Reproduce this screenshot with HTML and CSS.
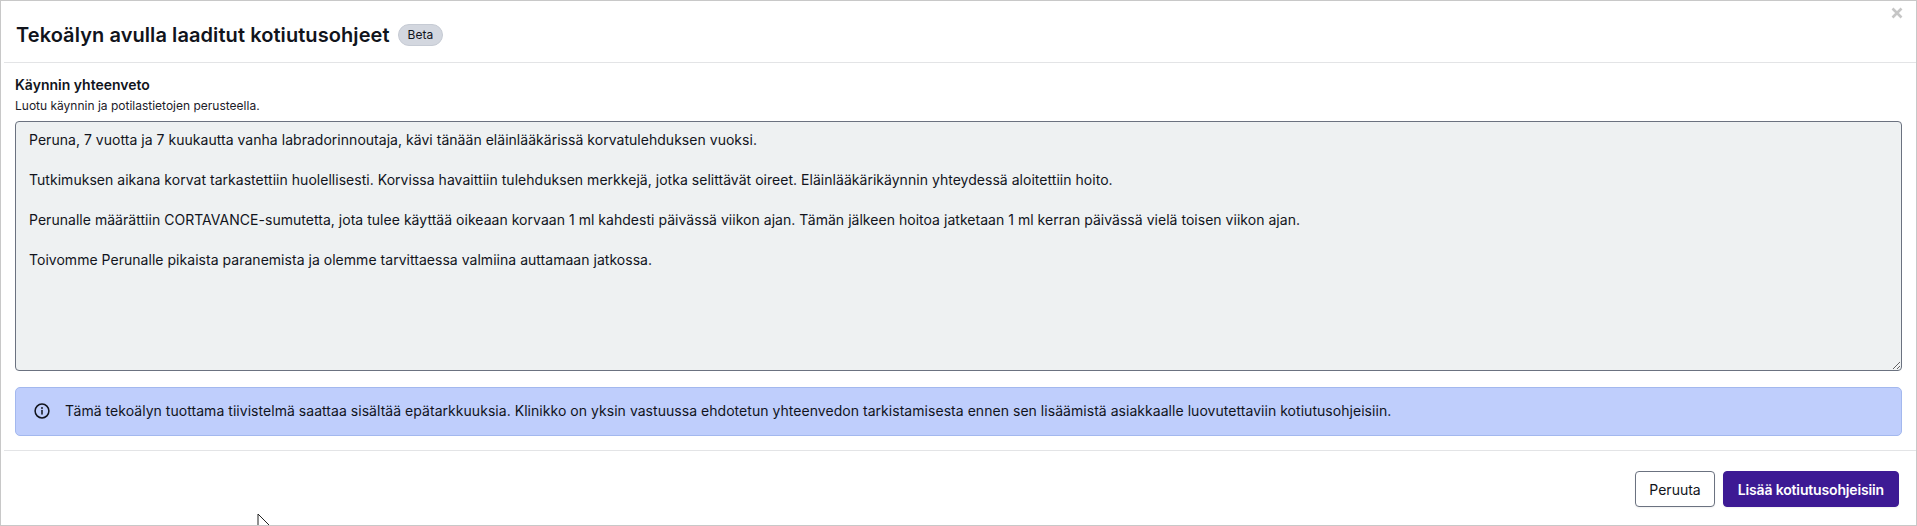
FILE: index.html
```html
<!DOCTYPE html>
<html lang="fi">
<head>
  <meta charset="UTF-8">
  <title>Tekoälyn avulla laaditut kotiutusohjeet</title>
  <link rel="stylesheet" href="styles.css">
</head>
<body>
  <div class="dialog">
    <button class="close-btn" aria-label="Sulje">
      <svg viewBox="0 0 12 12" width="12" height="12" fill="none" stroke="#c6c6c6" stroke-width="2.6">
        <path d="M1.500 1.500l9 9M10.500 1.500l-9 9"/>
      </svg>
    </button>
    <div class="dialog-header">
      <h1>Tekoälyn avulla laaditut kotiutusohjeet</h1>
      <span class="badge">Beta</span>
    </div>
    <div class="dialog-body">
      <label class="field-label" for="summary">Käynnin yhteenveto</label>
      <div class="field-help">Luotu käynnin ja potilastietojen perusteella.</div>
      <textarea id="summary" class="summary">Peruna, 7 vuotta ja 7 kuukautta vanha labradorinnoutaja, kävi tänään eläinlääkärissä korvatulehduksen vuoksi.

Tutkimuksen aikana korvat tarkastettiin huolellisesti. Korvissa havaittiin tulehduksen merkkejä, jotka selittävät oireet. Eläinlääkärikäynnin yhteydessä aloitettiin hoito.

Perunalle määrättiin CORTAVANCE-sumutetta, jota tulee käyttää oikeaan korvaan 1 ml kahdesti päivässä viikon ajan. Tämän jälkeen hoitoa jatketaan 1 ml kerran päivässä vielä toisen viikon ajan.

Toivomme Perunalle pikaista paranemista ja olemme tarvittaessa valmiina auttamaan jatkossa.</textarea>
      <div class="alert">
        <svg class="alert-icon" viewBox="0 0 16 16" width="16" height="16" fill="none" stroke="#11141c" stroke-width="1.5" stroke-linecap="round">
          <circle cx="8" cy="8" r="6.9"/>
          <path d="M8 7.400v3.600"/>
          <path d="M8 4.900v.1" stroke-width="1.900"/>
        </svg>
        <span>Tämä tekoälyn tuottama tiivistelmä saattaa sisältää epätarkkuuksia. Klinikko on yksin vastuussa ehdotetun yhteenvedon tarkistamisesta ennen sen lisäämistä asiakkaalle luovutettaviin kotiutusohjeisiin.</span>
      </div>
    </div>
    <div class="dialog-footer">
      <button class="btn">Peruuta</button>
      <button class="btn btn-primary">Lisää kotiutusohjeisiin</button>
    </div>
    <svg class="cursor" viewBox="0 0 13 18" width="13" height="18" fill="#fff" stroke="#222" stroke-width="1">
      <path d="M1 1v15l3.500-3.500h8z"/>
    </svg>
  </div>
</body>
</html>
```

FILE: styles.css
```css
* {
  box-sizing: border-box;
  margin: 0;
  padding: 0;
  font-family: Inter, "Noto Sans", sans-serif;
}

html, body {
  height: 100%;
  overflow: hidden;
}

body {
  background-color: #fff;
  color: #11141c;
}

.dialog {
  position: relative;
  height: 526px;
  border: 1px solid #c8c8c8;
  overflow: hidden;
}

.close-btn {
  position: absolute;
  top: 6px;
  right: 13px;
  display: flex;
  border: none;
  background: none;
}

.dialog-header {
  display: flex;
  align-items: center;
  gap: 8px;
  height: 62px;
  padding: 6px 15px 0 12px;
  margin-left: 3px;
  border-bottom: 1px solid #e3e4e6;
}

h1 {
  font-size: 20px;
  font-weight: 600;
  line-height: 28px;
  letter-spacing: 0.08px;
}

.badge {
  display: block;
  height: 22px;
  padding: 0 9px;
  border: 1px solid #c6cbd4;
  border-radius: 11px;
  background-color: #d3d7df;
  font-size: 12px;
  line-height: 20px;
}

.dialog-body {
  margin-left: 3px;
  padding: 12px 14px 14px 11px;
  border-bottom: 1px solid #e3e4e6;
}

.field-label {
  display: block;
  font-size: 14px;
  font-weight: 600;
  line-height: 20px;
}

.field-help {
  font-size: 12px;
  line-height: 16px;
  margin-top: 3px;
  margin-bottom: 7px;
  color: #1c2029;
}

.summary {
  display: block;
  width: 100%;
  height: 250px;
  padding: 8px 13px;
  border: 1px solid #6b7280;
  border-radius: 4px;
  background-color: #eef1f2;
  color: #11141c;
  font-size: 14px;
  line-height: 20px;
  letter-spacing: 0.03px;
  resize: vertical;
  outline: none;
}

.alert {
  display: flex;
  align-items: center;
  gap: 15px;
  height: 49px;
  margin-top: 16px;
  padding: 0 18px 2px 18px;
  border: 1px solid #a3b8ee;
  border-radius: 5px;
  background-color: #bfcefc;
  font-size: 14px;
  line-height: 20px;
  letter-spacing: 0.04px;
}

.alert-icon {
  flex: none;
}

.dialog-footer {
  display: flex;
  justify-content: flex-end;
  gap: 8px;
  padding: 20px 17px 0 0;
}

.btn {
  height: 36px;
  padding: 0 13px;
  border: 1px solid #6b7280;
  border-radius: 4px;
  background-color: #fff;
  color: #11141c;
  font-size: 14px;
  box-shadow: 0 1px 2px rgba(0, 0, 0, 0.06);
}

.btn-primary {
  padding: 0 14px;
  border-color: #3d1a94;
  background-color: #3d1a94;
  color: #fff;
  font-weight: 600;
  letter-spacing: -0.15px;
}

.cursor {
  position: absolute;
  left: 256px;
  top: 512px;
}
```
